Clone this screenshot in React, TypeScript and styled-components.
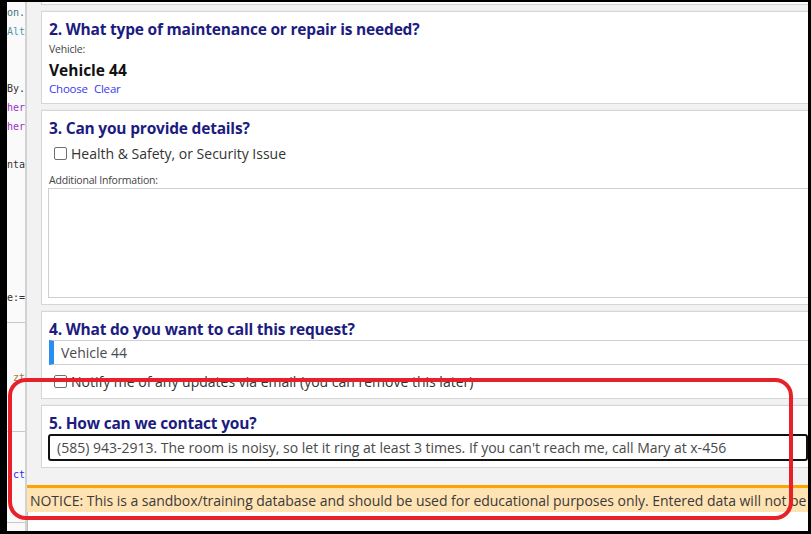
import React from "react";
import styled, { createGlobalStyle } from "styled-components";

const GlobalStyle = createGlobalStyle`
  html, body {
    margin: 0;
    padding: 0;
    background: #000;
  }
  body {
    font-family: "Open Sans", "Noto Sans", sans-serif;
  }
  * {
    box-sizing: border-box;
  }
`;

const Frame = styled.div`
  position: relative;
  width: 811px;
  height: 534px;
  overflow: hidden;
  background: #fff;
  border-style: solid;
  border-color: #000;
  border-width: 2px 3px 3px 7px;
  display: flex;
`;

/* code editor peeking out behind the dialog */
const Editor = styled.div`
  width: 18px;
  flex-shrink: 0;
  display: flex;
  flex-direction: column;
  background: #fafafa;
`;

const EditorPane = styled.div<{ $height: number }>`
  height: ${(p) => p.$height}px;
  padding-top: 1px;
  border-bottom: 1px solid #c8c8c8;
  overflow: hidden;
`;

const CodeLine = styled.div<{ $color?: string; $gap?: number }>`
  height: 19px;
  margin-top: ${(p) => p.$gap ?? 0}px;
  display: flex;
  justify-content: flex-end;
  align-items: center;
  white-space: nowrap;
  font-family: "DejaVu Sans Mono", "Liberation Mono", monospace;
  font-size: 10px;
  color: ${(p) => p.$color || "#333"};
`;

const Main = styled.div`
  flex: 1;
  display: flex;
  flex-direction: column;
  min-width: 0;
  border-left: 2px solid #d2d2d2;
  box-shadow: inset 1px 0 0 #bdbdbd;
`;

const Dialog = styled.div`
  background: #f2f2f2;
  padding: 0 0 17px 14px;
  display: flex;
  flex-direction: column;
  gap: 6px;
`;

const Card = styled.section<{ $stub?: boolean }>`
  background: #fff;
  border: 1px solid #d6d6d6;
  border-right: none;
  border-top: ${(p) => (p.$stub ? "none" : "1px solid #d6d6d6")};
  box-shadow: 0 -1px 0 #ececec;
  padding: ${(p) => (p.$stub ? "2px 0 0" : "7px 0 6px 7px")};
  display: flex;
  flex-direction: column;
`;

const Title = styled.h2`
  margin: 0;
  font-size: 15.5px;
  line-height: 20px;
  font-weight: 700;
  color: #1c1c80;
  letter-spacing: -0.2px;
  white-space: nowrap;
`;

const SmallLabel = styled.div<{ $top?: number }>`
  font-size: 10.5px;
  line-height: 14px;
  color: #444;
  margin-top: ${(p) => p.$top ?? 3}px;
  letter-spacing: -0.2px;
`;

const Selected = styled.div`
  font-size: 15.5px;
  line-height: 22px;
  font-weight: 700;
  color: #111;
  margin-top: 3px;
`;

const Links = styled.div`
  display: flex;
  gap: 6px;
  font-size: 11.5px;
  line-height: 16px;
  letter-spacing: -0.2px;
`;

const LinkText = styled.a`
  color: #3a3af0;
  text-decoration: none;
  cursor: pointer;
`;

const CheckRow = styled.label<{ $top?: number }>`
  display: flex;
  align-items: center;
  gap: 4px;
  height: 22px;
  margin-top: ${(p) => p.$top ?? 4}px;
  padding-left: 5px;
  font-size: 14px;
  color: #333;
  white-space: nowrap;
`;

const Check = styled.input.attrs({ type: "checkbox" })`
  appearance: none;
  margin: 0;
  width: 13px;
  height: 13px;
  border: 1px solid #6f6f6f;
  border-radius: 2px;
  background: #fff;
  flex-shrink: 0;
`;

const Notes = styled.textarea`
  display: block;
  height: 110px;
  margin: 1px 0 0 -1px;
  border: 1px solid #cfcfcf;
  border-right: none;
  resize: none;
  outline: none;
  font-family: inherit;
`;

const TextField = styled.input<{ $accent?: boolean; $strong?: boolean }>`
  display: block;
  height: ${(p) => (p.$strong ? 27 : 25)}px;
  margin: 1px 0 0 ${(p) => (p.$strong ? -1 : 0)}px;
  padding: 0 0 0 7px;
  border: ${(p) => (p.$strong ? "2px solid #111" : "1px solid #d0d0d0")};
  border-left: ${(p) =>
    p.$accent ? "5px solid #2a8df0" : p.$strong ? "2px solid #111" : "1px solid #d0d0d0"};
  border-right: ${(p) => (p.$strong ? "2px solid #111" : "none")};
  border-radius: ${(p) => (p.$strong ? "3px" : "0")};
  font-family: inherit;
  font-size: 14px;
  color: #4a4a4a;
  outline: none;
  background: #fff;
`;

const Notice = styled.div`
  border-top: 3px solid #ffa300;
  background: #ffe3b3;
  height: 27px;
  padding-left: 3px;
  display: flex;
  align-items: center;
  font-size: 14px;
  letter-spacing: -0.03px;
  color: #3a3a3a;
  white-space: nowrap;
`;

/* red callout drawn over the contact section */
const Callout = styled.div`
  position: absolute;
  left: 1px;
  top: 376px;
  width: 785px;
  height: 142px;
  border: 4px solid #e8202a;
  border-radius: 18px;
  pointer-events: none;
`;

const codeTop: { text: string; color?: string }[] = [
  { text: "on.", color: "#3f6f7d" },
  { text: "Alt", color: "#4f9aa8" },
  { text: "" },
  { text: "" },
  { text: "By." },
  { text: "her", color: "#9a35c0" },
  { text: "her", color: "#9a35c0" },
  { text: "" },
  { text: "nta" },
  { text: "" },
  { text: "" },
  { text: "" },
  { text: "" },
  { text: "" },
  { text: "" },
  { text: "e:=" },
];

export default function App() {
  return (
    <>
      <GlobalStyle />
      <Frame>
        <Editor>
          <EditorPane $height={321}>
            {codeTop.map((line, i) => (
              <CodeLine key={i} $color={line.color}>
                {line.text}
              </CodeLine>
            ))}
          </EditorPane>
          <EditorPane $height={109}>
            <CodeLine $gap={44} $color="#a87a44">
              zt
            </CodeLine>
          </EditorPane>
          <EditorPane $height={91}>
            <CodeLine $gap={32} $color="#2a2aff">
              ct
            </CodeLine>
          </EditorPane>
        </Editor>
        <Main>
          <Dialog>
            <Card $stub />
            <Card>
              <Title>2. What type of maintenance or repair is needed?</Title>
              <SmallLabel>Vehicle:</SmallLabel>
              <Selected>Vehicle 44</Selected>
              <Links>
                <LinkText>Choose</LinkText>
                <LinkText>Clear</LinkText>
              </Links>
            </Card>
            <Card>
              <Title>3. Can you provide details?</Title>
              <CheckRow>
                <Check />
                Health &amp; Safety, or Security Issue
              </CheckRow>
              <SmallLabel $top={9}>Additional Information:</SmallLabel>
              <Notes />
            </Card>
            <Card>
              <Title>4. What do you want to call this request?</Title>
              <TextField $accent defaultValue="Vehicle 44" />
              <CheckRow $top={5}>
                <Check />
                Notify me of any updates via email (you can remove this later)
              </CheckRow>
            </Card>
            <Card>
              <Title>5. How can we contact you?</Title>
              <TextField
                $strong
                defaultValue="(585) 943-2913. The room is noisy, so let it ring at least 3 times. If you can't reach me, call Mary at x-456"
              />
            </Card>
          </Dialog>
          <Notice>
            NOTICE: This is a sandbox/training database and should be used for educational purposes only. Entered data will not be
          </Notice>
        </Main>
        <Callout />
      </Frame>
    </>
  );
}
